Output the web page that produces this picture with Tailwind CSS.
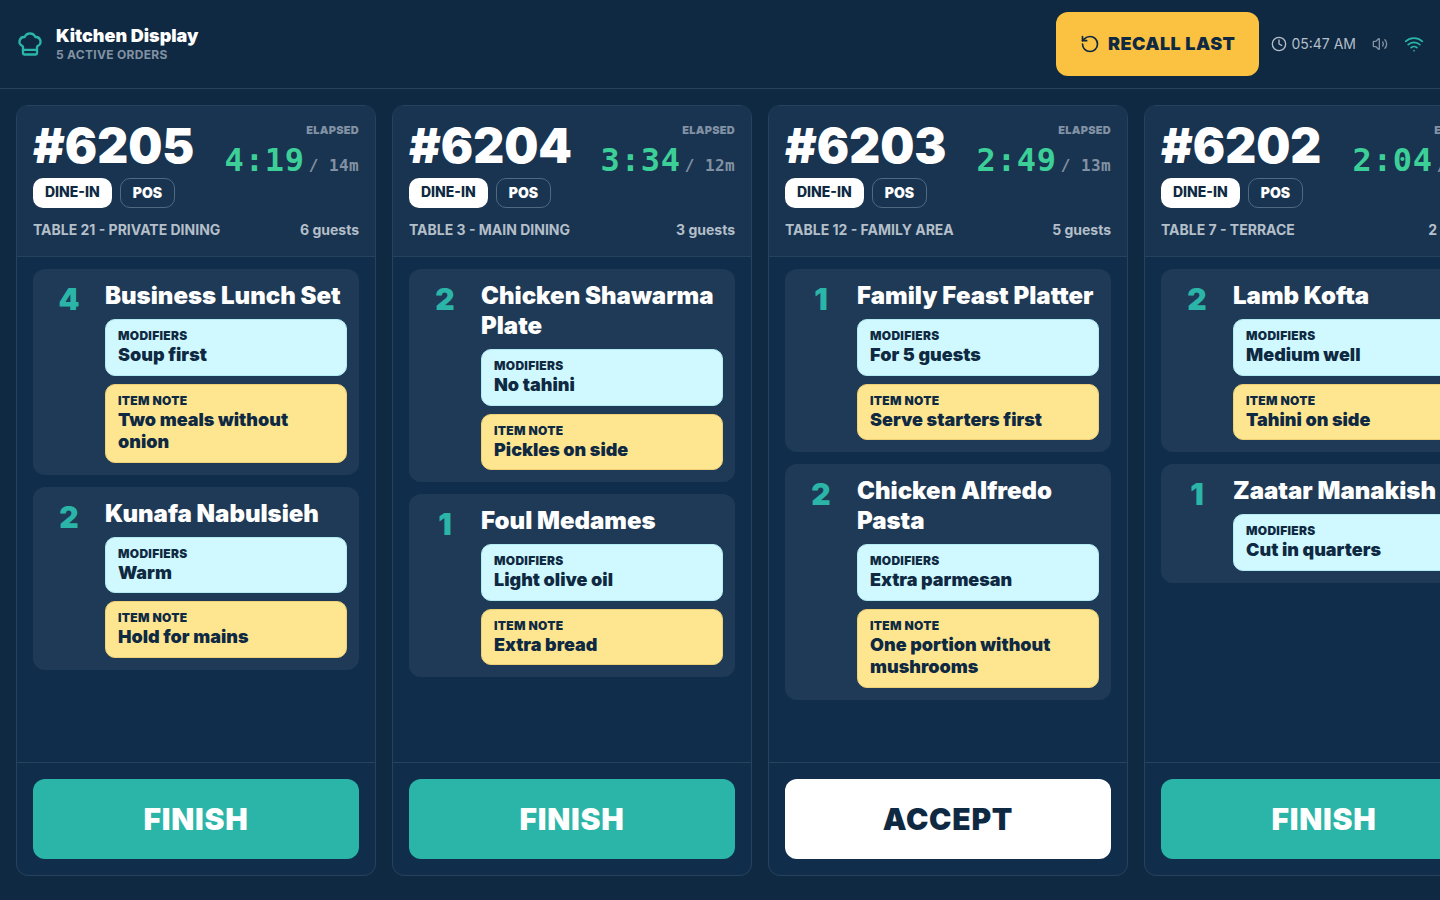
<!DOCTYPE html>
<html lang="en">
<head>
    <meta charset="UTF-8">
    <meta name="viewport" content="width=device-width, initial-scale=1.0">
    <title>Kitchen Display</title>
    <script src="https://cdn.jsdelivr.net/npm/@tailwindcss/browser@4"></script>
</head>
<body class="bg-[#0f2942] font-['Inter',sans-serif] text-white">
    <div class="flex h-screen flex-col overflow-hidden">
        <!-- Header -->
        <header class="flex shrink-0 items-center justify-between border-b border-[#27425d] px-4 py-3">
            <div class="flex items-center gap-3">
                <svg class="size-7 text-[#2bb5a8]" viewBox="0 0 24 24" fill="none" stroke="currentColor" stroke-width="2" stroke-linecap="round" stroke-linejoin="round">
                    <path d="M17 21a1 1 0 0 0 1-1v-5.35c0-.457.316-.844.727-1.041a4 4 0 0 0-2.134-7.589 5 5 0 0 0-9.186 0 4 4 0 0 0-2.134 7.588c.411.198.727.585.727 1.041V20a1 1 0 0 0 1 1Z"/>
                    <path d="M6 17h12"/>
                </svg>
                <div>
                    <h1 class="text-lg leading-tight font-black">Kitchen Display</h1>
                    <p class="text-xs font-bold tracking-wide text-[#8291a3]">5 ACTIVE ORDERS</p>
                </div>
            </div>
            <div class="flex items-center gap-3">
                <button type="button" class="flex h-16 items-center gap-2 rounded-xl bg-[#fbc140] px-6 text-lg font-black tracking-wide text-[#0f2942]">
                    <svg class="size-5" viewBox="0 0 24 24" fill="none" stroke="currentColor" stroke-width="2" stroke-linecap="round" stroke-linejoin="round">
                        <path d="M3 12a9 9 0 1 0 9-9 9.75 9.75 0 0 0-6.74 2.74L3 8"/>
                        <path d="M3 3v5h5"/>
                    </svg>
                    RECALL LAST
                </button>
                <div class="flex items-center gap-4 text-sm text-[#b4bfca]">
                    <span class="flex items-center gap-1">
                        <svg class="size-4" viewBox="0 0 24 24" fill="none" stroke="currentColor" stroke-width="2" stroke-linecap="round" stroke-linejoin="round">
                            <circle cx="12" cy="12" r="10"/>
                            <path d="M12 6v6l4 2"/>
                        </svg>
                        05:47 AM
                    </span>
                    <svg class="size-4 text-[#8291a3]" viewBox="0 0 24 24" fill="none" stroke="currentColor" stroke-width="2" stroke-linecap="round" stroke-linejoin="round">
                        <path d="M11 4.702a.705.705 0 0 0-1.203-.498L6.413 7.587A1.4 1.4 0 0 1 5.416 8H3a1 1 0 0 0-1 1v6a1 1 0 0 0 1 1h2.416a1.4 1.4 0 0 1 .997.413l3.383 3.384A.705.705 0 0 0 11 19.298z"/>
                        <path d="M16 9a5 5 0 0 1 0 6"/>
                        <path d="M19.364 18.364a9 9 0 0 0 0-12.728"/>
                    </svg>
                    <svg class="size-5 text-[#2bb5a8]" viewBox="0 0 24 24" fill="none" stroke="currentColor" stroke-width="2" stroke-linecap="round" stroke-linejoin="round">
                        <path d="M12 20h.01"/>
                        <path d="M2 8.82a15 15 0 0 1 20 0"/>
                        <path d="M5 12.859a10 10 0 0 1 14 0"/>
                        <path d="M8.5 16.429a5 5 0 0 1 7 0"/>
                    </svg>
                </div>
            </div>
        </header>

        <!-- Orders -->
        <main id="orders" class="flex min-h-0 flex-1 gap-4 overflow-x-auto overflow-y-hidden px-4 pt-4 pb-6 [scrollbar-width:none]"></main>
    </div>

    <script>
        const orders = [
            {
                id: 6205, elapsed: '4:19', target: '14m', table: 'TABLE 21 - PRIVATE DINING', guests: 6, action: 'FINISH',
                items: [
                    { qty: 4, name: 'Business Lunch Set', modifiers: 'Soup first', note: 'Two meals without onion' },
                    { qty: 2, name: 'Kunafa Nabulsieh', modifiers: 'Warm', note: 'Hold for mains' }
                ]
            },
            {
                id: 6204, elapsed: '3:34', target: '12m', table: 'TABLE 3 - MAIN DINING', guests: 3, action: 'FINISH',
                items: [
                    { qty: 2, name: 'Chicken Shawarma Plate', modifiers: 'No tahini', note: 'Pickles on side' },
                    { qty: 1, name: 'Foul Medames', modifiers: 'Light olive oil', note: 'Extra bread' }
                ]
            },
            {
                id: 6203, elapsed: '2:49', target: '13m', table: 'TABLE 12 - FAMILY AREA', guests: 5, action: 'ACCEPT',
                items: [
                    { qty: 1, name: 'Family Feast Platter', modifiers: 'For 5 guests', note: 'Serve starters first' },
                    { qty: 2, name: 'Chicken Alfredo Pasta', modifiers: 'Extra parmesan', note: 'One portion without mushrooms' }
                ]
            },
            {
                id: 6202, elapsed: '2:04', target: '11m', table: 'TABLE 7 - TERRACE', guests: 2, action: 'FINISH',
                items: [
                    { qty: 2, name: 'Lamb Kofta', modifiers: 'Medium well', note: 'Tahini on side' },
                    { qty: 1, name: 'Zaatar Manakish', modifiers: 'Cut in quarters' }
                ]
            }
        ];

        const actionStyles = {
            FINISH: 'bg-[#2bb5a8] text-white',
            ACCEPT: 'bg-white text-[#0f2942]'
        };

        function renderItem(item) {
            return `
                <li class="flex gap-3 rounded-xl bg-[#1f3a56] p-3">
                    <span class="w-12 shrink-0 text-center text-3xl font-black text-[#2bb5a8]">${item.qty}</span>
                    <div class="min-w-0 flex-1 space-y-2 text-[#0f2942]">
                        <h3 class="text-2xl leading-tight font-black text-white">${item.name}</h3>
                        <div class="rounded-[10px] border border-[#b3ebf3] bg-[#cff9fe] px-3 py-2">
                            <p class="text-xs font-black tracking-wide">MODIFIERS</p>
                            <p class="text-lg leading-tight font-black">${item.modifiers}</p>
                        </div>
                        ${item.note ? `
                        <div class="rounded-[10px] border border-[#efd077] bg-[#fee690] px-3 py-2">
                            <p class="text-xs font-black tracking-wide">ITEM NOTE</p>
                            <p class="text-lg leading-tight font-black">${item.note}</p>
                        </div>` : ''}
                    </div>
                </li>
            `;
        }

        function renderOrder(order) {
            return `
                <article class="flex w-90 shrink-0 flex-col overflow-hidden rounded-xl border border-[#27425d] bg-[#102d4b]">
                    <div class="border-b border-[#27425d] bg-[#183450] p-4">
                        <div class="flex items-start justify-between">
                            <div>
                                <h2 class="text-5xl leading-none font-black">#${order.id}</h2>
                                <div class="mt-2 flex gap-2 text-sm font-black">
                                    <span class="rounded-[10px] bg-white px-3 py-1 font-extrabold text-[#0f2942]">DINE-IN</span>
                                    <span class="rounded-[10px] border border-[#506880] px-3 py-1">POS</span>
                                </div>
                            </div>
                            <div class="text-right">
                                <p class="text-[11px] leading-4 font-black tracking-wide text-[#8291a3]">ELAPSED</p>
                                <p class="mt-1 flex items-baseline gap-1 font-['DejaVu_Sans_Mono',monospace] font-black">
                                    <span class="text-[32px] leading-9 tracking-wide text-[#3dcf98]">${order.elapsed}</span>
                                    <span class="text-base tracking-wide text-[#8291a3]">/ ${order.target}</span>
                                </p>
                            </div>
                        </div>
                        <div class="mt-3 flex justify-between text-sm font-bold text-[#b4bfca]">
                            <span>${order.table}</span>
                            <span>${order.guests} guests</span>
                        </div>
                    </div>
                    <ul class="min-h-0 flex-1 space-y-3 overflow-hidden px-4 py-3">
                        ${order.items.map(renderItem).join('')}
                    </ul>
                    <div class="border-t border-[#27425d] p-4">
                        <button type="button" class="h-20 w-full rounded-xl text-3xl font-black tracking-wide ${actionStyles[order.action]}">${order.action}</button>
                    </div>
                </article>
            `;
        }

        document.getElementById('orders').innerHTML = orders.map(renderOrder).join('');
    </script>
</body>
</html>
